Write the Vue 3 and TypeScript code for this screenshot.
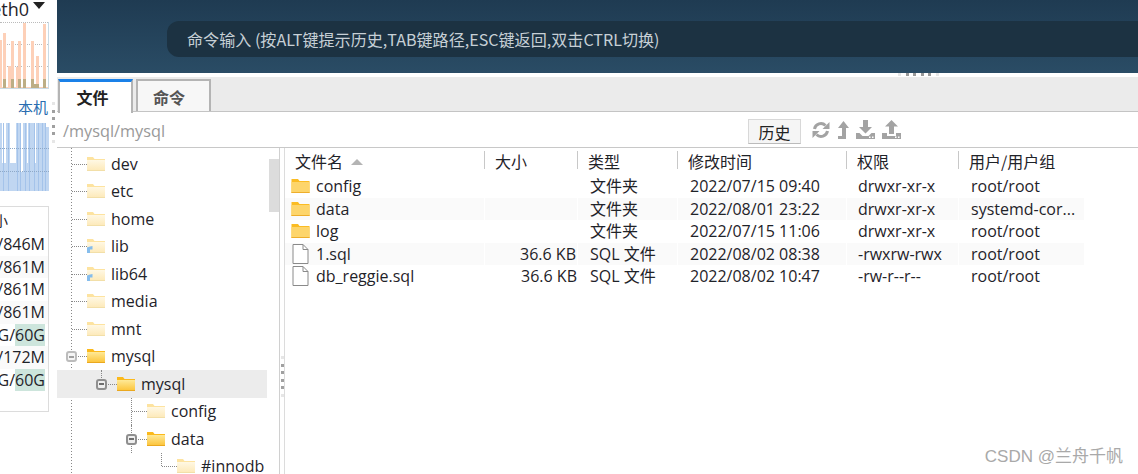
<script setup lang="ts">
interface TreeRow { name: string; depth: number; open?: boolean; link?: boolean; selected?: boolean }
interface FileRow { name: string; folder: boolean; size: string; type: string; time: string; perm: string; owner: string }

const tree: TreeRow[] = [
  { name: 'dev', depth: 0 },
  { name: 'etc', depth: 0 },
  { name: 'home', depth: 0 },
  { name: 'lib', depth: 0, link: true },
  { name: 'lib64', depth: 0, link: true },
  { name: 'media', depth: 0 },
  { name: 'mnt', depth: 0 },
  { name: 'mysql', depth: 0, open: true },
  { name: 'mysql', depth: 1, open: true, selected: true },
  { name: 'config', depth: 2 },
  { name: 'data', depth: 2, open: true },
  { name: '#innodb', depth: 3 },
]

const files: FileRow[] = [
  { name: 'config', folder: true, size: '', type: '文件夹', time: '2022/07/15 09:40', perm: 'drwxr-xr-x', owner: 'root/root' },
  { name: 'data', folder: true, size: '', type: '文件夹', time: '2022/08/01 23:22', perm: 'drwxr-xr-x', owner: 'systemd-cor...' },
  { name: 'log', folder: true, size: '', type: '文件夹', time: '2022/07/15 11:06', perm: 'drwxr-xr-x', owner: 'root/root' },
  { name: '1.sql', folder: false, size: '36.6 KB', type: 'SQL 文件', time: '2022/08/02 08:38', perm: '-rwxrw-rwx', owner: 'root/root' },
  { name: 'db_reggie.sql', folder: false, size: '36.6 KB', type: 'SQL 文件', time: '2022/08/02 10:47', perm: '-rw-r--r--', owner: 'root/root' },
]

const headers = ['大小', '类型', '修改时间', '权限', '用户/用户组']
const memory = [
  { text: '0M/846M', tint: false },
  { text: '0M/861M', tint: false },
  { text: '0M/861M', tint: false },
  { text: '0M/861M', tint: false },
  { text: '8G/60G', tint: true },
  { text: '0M/172M', tint: false },
  { text: '8G/60G', tint: true },
]

const orange = [
  { x: 0, w: 2, h: 48 }, { x: 3, w: 3, h: 55 }, { x: 8, w: 3, h: 22 }, { x: 11, w: 3, h: 47 }, { x: 16, w: 2, h: 21 },
  { x: 18, w: 3, h: 47 }, { x: 23, w: 3, h: 65 }, { x: 31, w: 3, h: 47 }, { x: 36, w: 3, h: 32 }, { x: 43, w: 3, h: 64 },
]
const olive = [
  { x: 3, w: 3, h: 9 }, { x: 11, w: 3, h: 9 }, { x: 18, w: 3, h: 9 }, { x: 23, w: 3, h: 9 }, { x: 31, w: 3, h: 9 }, { x: 33, w: 6, h: 4 }, { x: 43, w: 3, h: 9 },
]
const blueGaps = [
  { x: 2, w: 1, h: 40 }, { x: 4, w: 2, h: 40 }, { x: 10, w: 6, h: 40 }, { x: 21, w: 2, h: 49 }, { x: 27, w: 1, h: 40 }, { x: 35, w: 1, h: 40 }, { x: 46, w: 3, h: 4 },
]
const blueLines = [3, 8, 17, 20, 25, 29, 34, 38, 42, 45]
</script>

<template>
  <div class="screen">
    <aside class="side">
      <div class="iface"><span class="iface-name">eth0</span><span class="caret"></span></div>
      <div class="chart chart-orange">
        <i class="grid-h g1"></i><i class="grid-h g2"></i><i class="grid-h g3"></i>
        <i v-for="b in orange" :key="'o' + b.x" class="bar-o" :style="{ left: b.x + 'px', width: b.w + 'px', height: b.h + 'px' }"></i>
        <i class="base"></i>
        <i v-for="b in olive" :key="'l' + b.x" class="bar-l" :style="{ left: b.x + 'px', width: b.w + 'px', height: b.h + 'px' }"></i>
      </div>
      <div class="local">本机</div>
      <div class="chart chart-blue">
        <i v-for="g in blueGaps" :key="'g' + g.x" class="gap" :style="{ left: g.x + 'px', width: g.w + 'px', height: g.h + 'px' }"></i>
        <i v-for="x in blueLines" :key="'v' + x" class="vline" :style="{ left: x + 'px' }"></i>
        <i class="grid-b b1"></i><i class="grid-b b2"></i>
      </div>
      <div class="mem">
        <div class="mem-head">大小</div>
        <div v-for="(m, i) in memory" :key="i" class="mem-row" :class="{ alt: i % 2 === 1 }">
          <span v-if="m.tint">{{ m.text.slice(0, 3) }}<span class="tint">{{ m.text.slice(3) }}</span></span>
          <span v-else>{{ m.text }}</span>
        </div>
      </div>
    </aside>

    <div class="dots-v dots-left"><i v-for="n in 6" :key="n"></i></div>

    <main class="main">
      <header class="banner">
        <div class="cmd">命令输入 (按ALT键提示历史,TAB键路径,ESC键返回,双击CTRL切换)</div>
      </header>
      <div class="splitter"><i v-for="n in 6" :key="n"></i></div>
      <nav class="tabs">
        <div class="tab active">文件</div>
        <div class="tab">命令</div>
      </nav>
      <div class="pathbar">
        <span class="path">/mysql/mysql</span>
        <button class="history">历史</button>
        <div class="tools">
          <svg width="18" height="18" viewBox="0 0 18 18" fill="none">
            <path d="M2.500 8a6.500 6.500 0 0 1 11-3.500M15.500 10a6.500 6.500 0 0 1-11 3.500" stroke="#a3a3a3" stroke-width="3"/>
            <path d="M17.500 1v7h-7zM.5 17v-7h7z" fill="#a3a3a3"/>
          </svg>
          <svg width="12" height="18" viewBox="0 0 12 18"><path d="M6.500 0l5.500 7H9v11H1v-3h4V7H1z" fill="#a3a3a3"/></svg>
          <svg width="19" height="19" viewBox="0 0 19 19"><path d="M7 0h5v7h4l-6.500 6.500L3 7h4zM0 13h3.500l3 3h6l3-3H19v6H0z" fill="#a3a3a3"/><path d="M13 16.500h1.500V18H13zM16 16.500h1.500V18H16z" fill="#fff"/></svg>
          <svg width="19" height="19" viewBox="0 0 19 19"><path d="M9.500 0L16 6.500h-4V14H7V6.500H3zM0 13h5v3h9v-3h5v6H0z" fill="#a3a3a3"/><path d="M13 16.500h1.500V18H13zM16 16.500h1.500V18H16z" fill="#fff"/></svg>
        </div>
      </div>
      <section class="panes">
        <div class="tree">
          <div class="tree-scroll"></div>
          <div v-for="(r, i) in tree" :key="i" class="tree-row" :class="['d' + r.depth, { selected: r.selected }]">
            <span class="branch"></span>
            <span v-if="r.open" class="toggle" :class="{ strong: r.depth > 0 }"></span>
            <span class="folder-t">
              <svg width="18" height="16" viewBox="0 0 18 16">
                <defs>
                  <linearGradient id="fPale" x1="0" y1="0" x2="0" y2="1"><stop offset="0" stop-color="#fff8e4"/><stop offset="1" stop-color="#fdeabb"/></linearGradient>
                  <linearGradient id="fOpen" x1="0" y1="0" x2="0" y2="1"><stop offset="0" stop-color="#fee997"/><stop offset="1" stop-color="#fcc63f"/></linearGradient>
                </defs>
                <path d="M0 1h6l1.500 2H18v12H0z" :fill="r.open ? '#fbb91c' : '#fde3a0'"/>
                <path d="M0 4h18v10H0z" :fill="r.open ? 'url(#fOpen)' : 'url(#fPale)'"/>
                <path d="M0 14h18v1H0z" :fill="r.open ? '#eaa81f' : '#f2dfa8'"/>
                <path v-if="r.link" d="M0 15V9.500l3-1 2.500-.5v3.500H3V15z" fill="#86bdec"/>
              </svg>
            </span>
            <span class="tree-name">{{ r.name }}</span>
          </div>
          <div class="dots-v dots-mid"><i v-for="n in 6" :key="n"></i></div>
        </div>
        <div class="list">
          <div class="list-head">
            <div class="th">文件名<span class="sort"></span></div>
            <div v-for="h in headers" :key="h" class="th">{{ h }}</div>
          </div>
          <div v-for="(f, i) in files" :key="f.name" class="list-row" :class="{ alt: i % 2 === 1 }">
            <div class="td name">
              <svg v-if="f.folder" class="ficon" width="18" height="16" viewBox="0 0 18 16">
                <path d="M0 1h6.500L8 3h10v12H0z" fill="#fbbc23"/>
                <path d="M0 4h18v11H0z" fill="#fdd56b"/>
                <path d="M0 14h18v1H0z" fill="#eeae2b"/>
              </svg>
              <svg v-else class="ficon" width="18" height="20" viewBox="0 0 18 20">
                <path d="M1.500.500h10l5 5v14h-15z" fill="#fff" stroke="#8a8a8a"/>
                <path d="M11.500.500v5h5" fill="none" stroke="#8a8a8a"/>
              </svg>
              {{ f.name }}
            </div>
            <div class="td size">{{ f.size }}</div>
            <div class="td type">{{ f.type }}</div>
            <div class="td time">{{ f.time }}</div>
            <div class="td perm">{{ f.perm }}</div>
            <div class="td owner">{{ f.owner }}</div>
          </div>
        </div>
      </section>
    </main>
    <div class="mark">CSDN @兰舟千帆</div>
  </div>
</template>

<style>
html, body { margin: 0; background: #fff; overflow: hidden; }
</style>

<style scoped>
.screen {
  position: relative;
  width: 1138px;
  height: 474px;
  display: flex;
  overflow: hidden;
  background: #fff;
  color: #1f2329;
  font-family: "Open Sans", "Noto Sans CJK SC", sans-serif;
  font-size: 16px;
}
.side {
  width: 49px;
  flex: none;
  overflow: hidden;
  position: relative;
}
.iface {
  height: 22px;
  box-sizing: border-box;
  padding-bottom: 5px;
  display: flex;
  justify-content: flex-end;
  align-items: center;
  gap: 4px;
  margin-right: 4px;
  white-space: nowrap;
  font-size: 18px;
}
.caret {
  border-left: 6px solid transparent;
  border-right: 6px solid transparent;
  border-top: 7px solid #222;
  margin-top: -7px;
  flex: none;
}
.iface-name { flex: none; }
.chart { position: relative; width: 49px; overflow: hidden; }
.chart-orange {
  height: 67px;
  border-right: 1px solid #c9dbe6;
  border-bottom: 1px solid #c9dbe6;
  box-sizing: border-box;
}
.grid-h { position: absolute; left: 0; right: 0; border-top: 1px dotted #bbb; }
.g1 { top: 0; }
.g2 { top: 22px; }
.g3 { top: 44px; }
.bar-o { position: absolute; bottom: 0; background: #fdd0b8; }
.base { position: absolute; left: 0; right: 0; bottom: 0; height: 1px; background: #fdd0b8; }
.bar-l { position: absolute; bottom: 0; background: #bdae85; }
.local {
  height: 34px;
  line-height: 36px;
  text-align: right;
  font-size: 15px;
  color: #2a6db0;
  padding-right: 1px;
  font-family: "Noto Sans CJK SC", sans-serif;
}
.chart-blue { height: 68px; background: #c0d6f1; }
.gap { position: absolute; top: 0; background: #fff; }
.vline { position: absolute; top: 0; bottom: 0; width: 1px; background: #a4c3ea; }
.grid-b { position: absolute; left: 0; right: 0; border-top: 1px dotted #8ea9c8; }
.b1 { top: 25px; }
.b2 { top: 48px; }
.mem {
  margin-top: 15px;
  height: 206px;
  box-sizing: border-box;
  border: 1px solid #dcdcdc;
  border-left: 0;
  width: 49px;
  overflow: hidden;
  font-size: 16px;
  padding-top: 1px;
}
.mem-head {
  height: 25px;
  line-height: 25px;
  display: flex;
  justify-content: flex-end;
  margin-right: 40px;
  font-size: 14px;
  white-space: nowrap;
  font-family: "Noto Sans CJK SC", sans-serif;
}
.mem-row {
  height: 22.700px;
  line-height: 22.700px;
  display: flex;
  justify-content: flex-end;
  white-space: nowrap;
  padding-right: 3px;
}
.mem-row.alt { background: #fafafa; }
.tint { background: #cde5dc; }
.dots-v {
  display: flex;
  flex-direction: column;
  gap: 4.500px;
}
.dots-v i { width: 3px; height: 3px; background: #a0a0a0; display: block; }
.dots-v i:first-child, .dots-v i:last-child { background: #e6e6e6; }
.dots-left { position: absolute; left: 52px; top: 102px; }
.main {
  flex: 1;
  margin-left: 8px;
  display: flex;
  flex-direction: column;
  min-width: 0;
}
.banner {
  height: 73px;
  flex: none;
  background: linear-gradient(180deg, #1f3b52 0%, #2a4c65 100%);
  box-sizing: border-box;
  padding: 21px 0 0 110px;
}
.cmd {
  height: 36px;
  line-height: 37px;
  background: #1c3242;
  border-radius: 12px 0 0 12px;
  padding-left: 20px;
  color: #c7d0d6;
  font-size: 16.080px;
  white-space: nowrap;
  font-family: "Noto Sans CJK SC", sans-serif;
}
.splitter {
  height: 4px;
  flex: none;
  display: flex;
  gap: 4.500px;
  background: #fff;
  box-sizing: border-box;
  padding-left: 841px;
}
.splitter i { width: 3px; height: 3px; background: #999; }
.splitter i:first-child, .splitter i:last-child { background: #e6e6e6; }
.tabs {
  height: 35px;
  flex: none;
  background: #ebebeb;
  border-bottom: 1px solid #c4c4c4;
  box-sizing: border-box;
  display: flex;
  gap: 3px;
  padding: 2px 0 0 1px;
}
.tab {
  width: 75px;
  box-sizing: border-box;
  border: 2px solid #b4b4b4;
  border-bottom: 0;
  background: #f7f7f7;
  color: #555;
  font-weight: 700;
  font-size: 16px;
  text-align: center;
  padding-right: 9px;
  line-height: 32px;
  font-family: "Noto Sans CJK SC", sans-serif;
}
.tab.active {
  background: #fff;
  border-top: 3px solid #1a81e8;
  color: #222;
  padding-right: 6px;
  line-height: 30px;
  height: 34px;
}
.pathbar {
  height: 36px;
  flex: none;
  box-sizing: border-box;
  border-bottom: 1px solid #c8c8c8;
  display: flex;
  align-items: center;
  padding-left: 6px;
}
.path { color: #999; font-size: 16.300px; width: 685px; padding-top: 2px; }
.history {
  width: 53px;
  height: 25px;
  padding: 0;
  background: #f5f5f5;
  border: 1px solid #d8d8d8;
  border-bottom-color: #bbb;
  font: 16px "Noto Sans CJK SC", sans-serif;
  color: #222;
  margin-top: 4px;
}
.tools { display: flex; gap: 7px; margin-left: 11px; align-items: center; }
.panes { display: flex; flex: 1; min-height: 0; }
.tree {
  width: 222px;
  flex: none;
  position: relative;
  border-right: 1px solid #d0d0d0;
  margin-right: 5px;
  padding-top: 2px;
  background-image: repeating-linear-gradient(180deg, #888 0 1px, transparent 1px 3px);
  background-size: 1px 100%;
  background-position: 14px 0;
  background-repeat: no-repeat;
}
.tree-scroll {
  position: absolute;
  right: 0;
  top: 11px;
  width: 10px;
  height: 53px;
  background: #dcdcdc;
}
.tree-row {
  position: relative;
  height: 27.500px;
  display: flex;
  align-items: center;
  width: 210px;
  box-sizing: border-box;
  font-size: 16px;
  white-space: nowrap;
}
.tree-row.selected { background: #ececec; }
.d0 { padding-left: 30px; }
.d1 { padding-left: 60px; }
.d2 { padding-left: 90px; }
.d3 { padding-left: 120px; }
.branch {
  position: absolute;
  top: 50%;
  height: 0;
  border-top: 1px dotted #888;
  width: 15px;
}
.d0 .branch { left: 15px; }
.d1 .branch { left: 45px; }
.d2 .branch { left: 75px; }
.d3 .branch { left: 105px; }
.d1::before, .d2::before, .d3::before {
  content: "";
  position: absolute;
  top: 0;
  bottom: 0;
  border-left: 1px dotted #888;
}
.d1::before { left: 44px; bottom: 50%; }
.d2::before { left: 74px; }
.d3::before { left: 104px; bottom: 50%; }
.toggle {
  position: absolute;
  top: 50%;
  margin-top: -5px;
  width: 11px;
  height: 11px;
  box-sizing: border-box;
  border: 2px solid #bcbcbc;
  border-radius: 3px;
  background: linear-gradient(#a0a0a0, #a0a0a0) center / 5px 2px no-repeat #f5f5f5;
}
.toggle.strong { border-color: #8f8f8f; background: linear-gradient(#6e6e6e, #6e6e6e) center / 5px 2px no-repeat #eee; }
.d0 .toggle { left: 9px; }
.d1 .toggle { left: 39px; }
.d2 .toggle { left: 69px; }
.folder-t { display: flex; margin-right: 6px; position: relative; }
.tree-name { position: relative; }
.dots-mid { position: absolute; left: 224px; top: 208px; }
.list { flex: 1; min-width: 0; font-size: 16px; position: relative; }
.list::before {
  content: "";
  position: absolute;
  left: -1px;
  top: 0;
  bottom: 0;
  border-left: 1px solid #dcdcdc;
}
.list-head, .list-row {
  display: grid;
  grid-template-columns: 200px 93px 100px 169px 112px 126px;
  width: 800px;
}
.list-head {
  height: 26px;
  line-height: 24px;
  margin-top: 1px;
}
.th {
  padding-left: 10px;
  position: relative;
  font-family: "Noto Sans CJK SC", sans-serif;
  font-size: 16px;
  white-space: nowrap;
}
.th:not(:last-child)::after {
  content: "";
  position: absolute;
  right: 0;
  top: 2px;
  height: 18px;
  border-right: 1px solid #c8c8c8;
}
.sort {
  display: inline-block;
  border-left: 6px solid transparent;
  border-right: 6px solid transparent;
  border-bottom: 6px solid #b4b4b4;
  margin-left: 8px;
  vertical-align: 3px;
}
.list-row { height: 22.500px; line-height: 22.500px; }
.list-row.alt .td { background: #fafafa; margin-right: 1px; }
.td { white-space: nowrap; font-size: 16px; }
.name { display: flex; align-items: center; padding-left: 6px; }
.ficon { width: 19px; margin-right: 6px; flex: none; }
.size { text-align: right; padding-right: 1px; }
.type { padding-left: 12px; }
.time { padding-left: 12px; }
.perm { padding-left: 11px; }
.owner { padding-left: 12px; }
.mark {
  position: absolute;
  right: 15px;
  bottom: 7px;
  color: #a9a9a9;
  font-size: 17px;
  font-family: "Liberation Sans", "Noto Sans CJK SC", sans-serif;
}
</style>
